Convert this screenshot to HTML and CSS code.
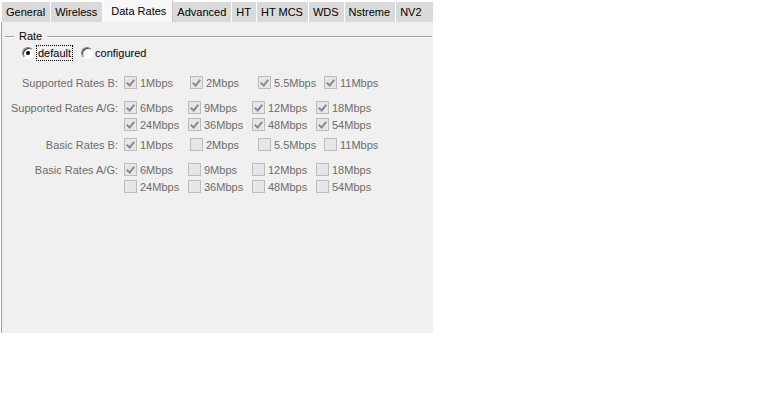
FILE: index.html
```html
<!DOCTYPE html>
<html lang="en">
<head>
    <meta charset="UTF-8">
    <title>Wireless - Data Rates</title>
    <link rel="stylesheet" href="styles.css">
</head>
<body>
    <div class="window">
        <div class="tabs">
            <div class="tab">General</div>
            <div class="tab">Wireless</div>
            <div class="tab active">Data Rates</div>
            <div class="tab">Advanced</div>
            <div class="tab">HT</div>
            <div class="tab">HT MCS</div>
            <div class="tab">WDS</div>
            <div class="tab">Nstreme</div>
            <div class="tab">NV2</div>
        </div>

        <div class="panel">
            <div class="group-title"><span>Rate</span></div>

            <div class="radios">
                <div class="radio-item">
                    <span class="radio checked"></span>
                    <span class="focus">default</span>
                </div>
                <div class="radio-item">
                    <span class="radio"></span>
                    <span>configured</span>
                </div>
            </div>

            <div class="rates">
                <!-- Supported Rates B -->
                <div class="rate-group b-rates">
                    <div class="rate-label">Supported Rates B:</div>
                    <label class="check"><span class="box on"></span>1Mbps</label>
                    <label class="check"><span class="box on"></span>2Mbps</label>
                    <label class="check"><span class="box on"></span>5.5Mbps</label>
                    <label class="check"><span class="box on"></span>11Mbps</label>
                </div>

                <!-- Supported Rates A/G -->
                <div class="rate-group ag-rates">
                    <div class="rate-label">Supported Rates A/G:</div>
                    <label class="check"><span class="box on"></span>6Mbps</label>
                    <label class="check"><span class="box on"></span>9Mbps</label>
                    <label class="check"><span class="box on"></span>12Mbps</label>
                    <label class="check"><span class="box on"></span>18Mbps</label>
                    <div class="rate-label"></div>
                    <label class="check"><span class="box on"></span>24Mbps</label>
                    <label class="check"><span class="box on"></span>36Mbps</label>
                    <label class="check"><span class="box on"></span>48Mbps</label>
                    <label class="check"><span class="box on"></span>54Mbps</label>
                </div>

                <!-- Basic Rates B -->
                <div class="rate-group b-rates tight">
                    <div class="rate-label">Basic Rates B:</div>
                    <label class="check"><span class="box on"></span>1Mbps</label>
                    <label class="check"><span class="box"></span>2Mbps</label>
                    <label class="check"><span class="box"></span>5.5Mbps</label>
                    <label class="check"><span class="box"></span>11Mbps</label>
                </div>

                <!-- Basic Rates A/G -->
                <div class="rate-group ag-rates">
                    <div class="rate-label">Basic Rates A/G:</div>
                    <label class="check"><span class="box on"></span>6Mbps</label>
                    <label class="check"><span class="box"></span>9Mbps</label>
                    <label class="check"><span class="box"></span>12Mbps</label>
                    <label class="check"><span class="box"></span>18Mbps</label>
                    <div class="rate-label"></div>
                    <label class="check"><span class="box"></span>24Mbps</label>
                    <label class="check"><span class="box"></span>36Mbps</label>
                    <label class="check"><span class="box"></span>48Mbps</label>
                    <label class="check"><span class="box"></span>54Mbps</label>
                </div>
            </div>
        </div>
    </div>
</body>
</html>
```

FILE: styles.css
```css
body {
    margin: 0;
    background-color: #ffffff;
    font-family: "Liberation Sans", Arial, sans-serif;
    font-size: 11px;
    color: #000;
}

.window {
    width: 433px;
}

/* Tab strip */
.tabs {
    display: flex;
    height: 22px;
    padding-left: 2px;
    background-color: #ffffff;
}

.tab {
    margin-top: 2px;
    height: 20px;
    line-height: 20px;
    padding: 0 5px 0 4px;
    background-color: #dadada;
    border-right: 1px solid #ffffff;
    white-space: nowrap;
}

.tab.active {
    margin-top: 0;
    height: 22px;
    line-height: 23px;
    padding: 0 6px 0 7px;
    background-color: #f7f7f7;
    border-left: 1px solid #ffffff;
    border-right: 1px solid #c8c8c8;
}

.tab:last-child {
    flex: 1;
    border-right: none;
}

/* Main panel */
.panel {
    height: 311px;
    margin-left: 1px;
    border-left: 1px solid #a0a0a0;
    background-color: #f0f0f0;
    padding-top: 7px;
    box-sizing: border-box;
}

.group-title {
    display: flex;
    align-items: center;
    height: 14px;
    margin: 0 1px 0 3px;
}

.group-title::before,
.group-title::after {
    content: "";
    height: 1px;
    background-color: #a0a0a0;
    box-shadow: 0 1px 0 #ffffff;
}

.group-title::before {
    width: 9px;
}

.group-title::after {
    flex: 1;
}

.group-title span {
    padding: 0 5px;
}

/* Radio buttons */
.radios {
    display: flex;
    gap: 8px;
    margin: 2px 0 0 20px;
    height: 16px;
}

.radio-item {
    display: flex;
    align-items: center;
    gap: 2px;
}

.radio {
    position: relative;
    width: 12px;
    height: 12px;
    box-sizing: border-box;
    border-radius: 50%;
    border: 1px solid;
    border-color: #808080 #ffffff #ffffff #808080;
    background-color: #ffffff;
    box-shadow: inset 1px 1px 0 #404040;
}

.radio.checked::after {
    content: "";
    position: absolute;
    left: 3px;
    top: 3px;
    width: 4px;
    height: 4px;
    border-radius: 50%;
    background-color: #000;
}

.focus {
    padding: 1px 1px;
    border: 1px dotted #000;
}

/* Rate check boxes */
.rates {
    margin-top: 13px;
}

.rate-group {
    display: grid;
    grid-auto-rows: 17px;
    align-items: center;
    margin-bottom: 8px;
    color: #6d6d6d;
}

.b-rates {
    grid-template-columns: 122px 66px 68px 66px 66px;
}

.ag-rates {
    grid-template-columns: 122px 64px 64px 64px 64px;
}

.rate-group.b-rates.tight {
    margin-top: -5px;
}

.rate-label {
    text-align: right;
    padding-right: 6px;
    white-space: nowrap;
}

.check {
    display: flex;
    align-items: center;
    gap: 3px;
    white-space: nowrap;
}

.box {
    position: relative;
    width: 13px;
    height: 13px;
    box-sizing: border-box;
    border: 1px solid #bcbcbc;
    background-color: #e6e6e6;
}

.box.on::after {
    content: "";
    position: absolute;
    left: 3px;
    top: 1px;
    width: 3px;
    height: 6px;
    border-right: 2px solid #8a8a8a;
    border-bottom: 2px solid #8a8a8a;
    transform: rotate(40deg);
}
```
